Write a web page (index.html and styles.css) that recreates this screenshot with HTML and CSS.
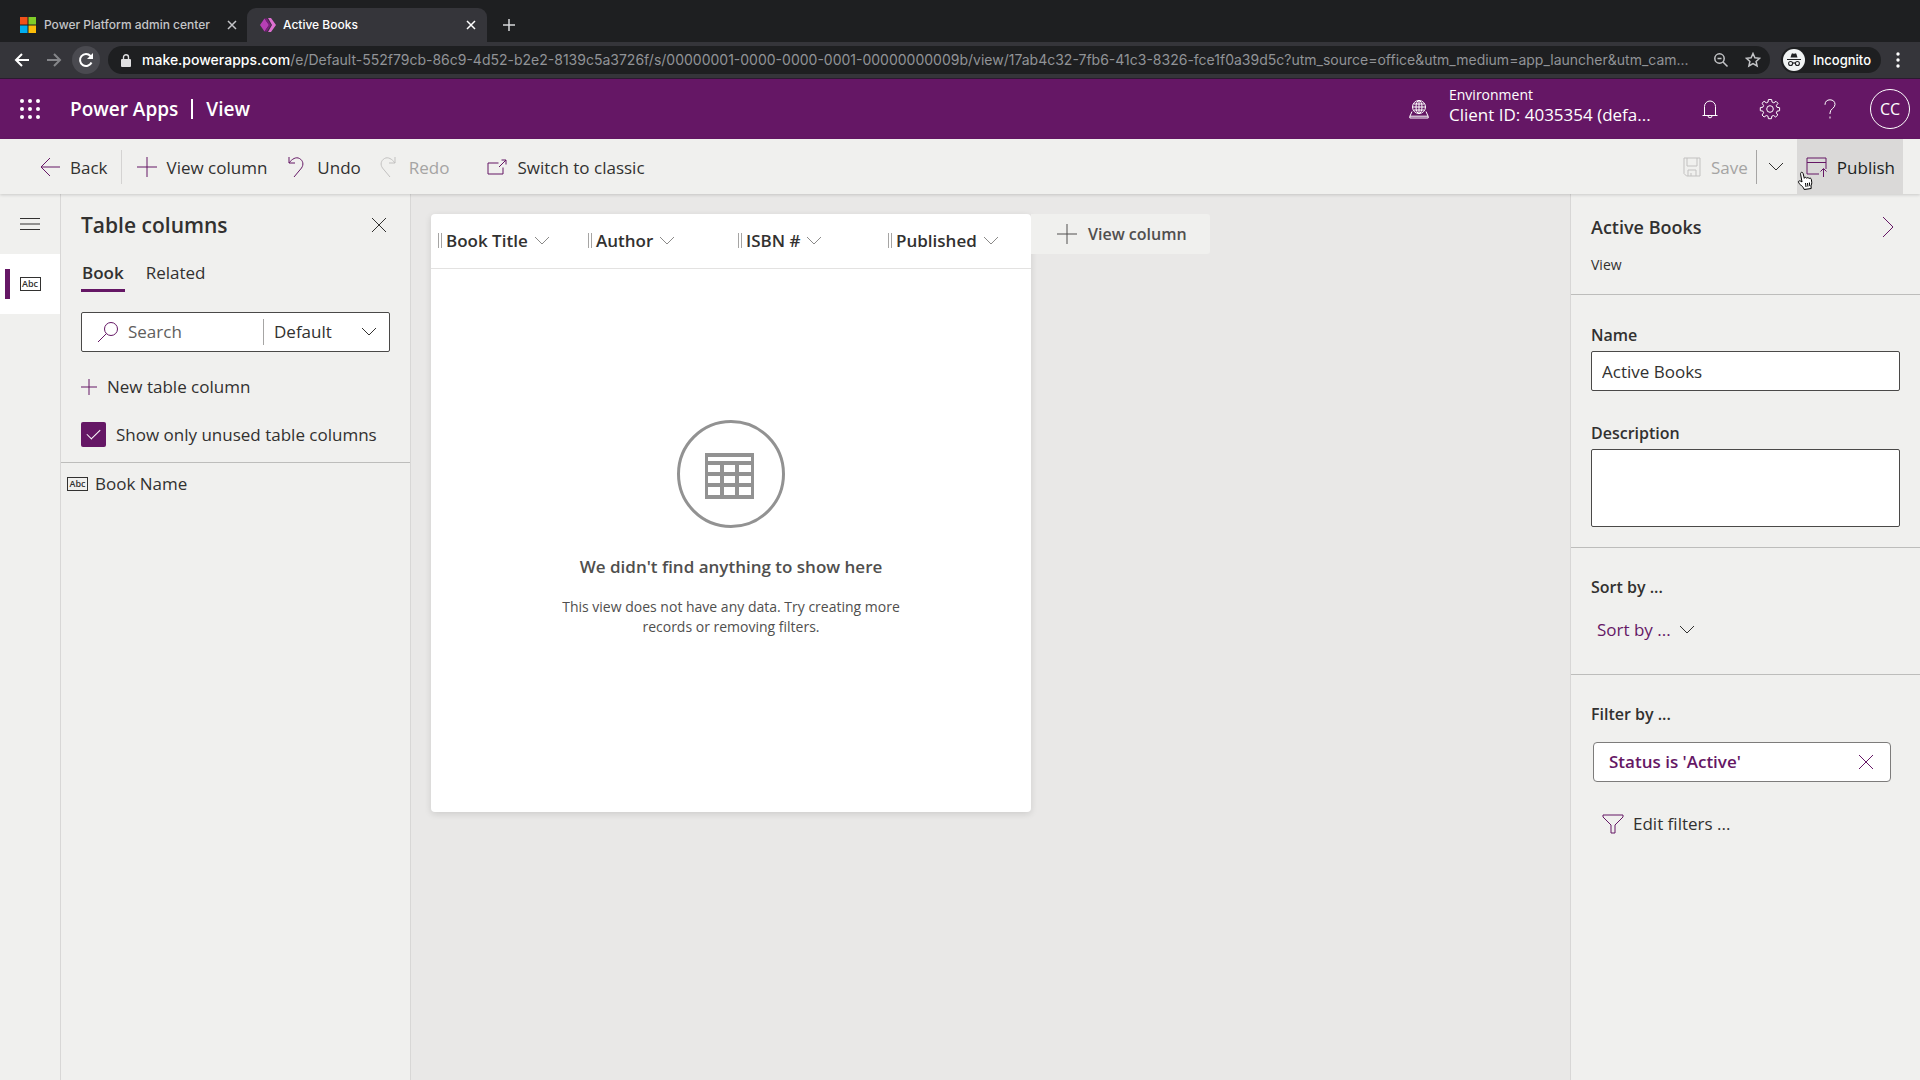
FILE: index.html
```html
<!DOCTYPE html>
<html lang="en">
<head>
<meta charset="utf-8">
<title>Active Books</title>
<meta name="viewport" content="width=device-width, initial-scale=1">
<link rel="stylesheet" href="styles.css">
</head>
<body>
<div class="browser">
  <div class="tabstrip">
    <div class="browser-tab">
      <svg width="16" height="16" viewBox="0 0 16 16"><path fill="#f1511b" d="M0 0h7.500v7.500H0z"/><path fill="#80cc28" d="M8.500 0H16v7.500H8.500z"/><path fill="#00adef" d="M0 8.500h7.500V16H0z"/><path fill="#fbbc09" d="M8.500 8.500H16V16H8.500z"/></svg>
      <span class="tab-title">Power Platform admin center</span>
      <button class="tab-close" aria-label="Close tab"><svg width="10" height="10" viewBox="0 0 10 10"><path d="M1 1l8 8M9 1L1 9"/></svg></button>
    </div>
    <div class="browser-tab current">
      <svg width="16" height="16" viewBox="0 0 16 16"><path fill="#b63fb4" d="M4.500 1.500L0 8l4.500 6.500L9 8z"/><path fill="#7a1d7c" d="M4.500 1.500H7L11 8l-4 6.500H4.500L9 8z"/><path fill="#dd6fd0" d="M8 1h3l5 7-5 7H8l4-7z"/></svg>
      <span class="tab-title">Active Books</span>
      <button class="tab-close" aria-label="Close tab"><svg width="10" height="10" viewBox="0 0 10 10"><path d="M1 1l8 8M9 1L1 9"/></svg></button>
    </div>
    <button class="tab-new" aria-label="New tab"><svg width="14" height="14" viewBox="0 0 14 14"><path d="M7 1v12M1 7h12"/></svg></button>
  </div>
  <div class="navbar">
    <button class="nav-btn" aria-label="Back"><svg width="16" height="16" viewBox="0 0 16 16"><path d="M15 8H2M8 2L2 8l6 6"/></svg></button>
    <button class="nav-btn dim" aria-label="Forward"><svg width="16" height="16" viewBox="0 0 16 16"><path d="M1 8h13M8 2l6 6-6 6"/></svg></button>
    <button class="nav-btn round" aria-label="Reload"><svg width="16" height="16" viewBox="0 0 16 16"><path d="M13.500 10.500A6 6 0 1 1 12.500 4L14 5.500"/><path class="solid" d="M15 1v6H9z"/></svg></button>
    <div class="omnibox">
      <svg width="10" height="13" viewBox="0 0 10 13"><path fill="#e0e0e2" d="M1 5h8q1 0 1 1v6q0 1-1 1H1q-1 0-1-1V6q0-1 1-1z"/><path fill="none" stroke="#e0e0e2" stroke-width="1.400" d="M2.500 5.500V3.200a2.500 2.500 0 0 1 5 0v2.300"/></svg>
      <span class="url"><b>make.powerapps.com</b>/e/Default-552f79cb-86c9-4d52-b2e2-8139c5a3726f/s/00000001-0000-0000-0001-00000000009b/view/17ab4c32-7fb6-41c3-8326-fce1f0a39d5c?utm_source=office&amp;utm_medium=app_launcher&amp;utm_cam...</span>
      <svg class="line" width="16" height="16" viewBox="0 0 16 16"><circle cx="6.500" cy="6.500" r="4.700"/><path d="M10 10l4.500 4.500M4.500 6.500h4"/></svg>
      <svg class="line" width="16" height="16" viewBox="0 0 16 16"><path d="M8 1.500l1.900 4.300 4.700.5-3.500 3.100 1 4.600L8 11.600 3.900 14l1-4.600L1.400 6.300l4.700-.5z"/></svg>
    </div>
    <div class="incognito">
      <svg width="22" height="22" viewBox="0 0 22 22"><circle cx="11" cy="11" r="11" fill="#f1f3f4"/><path fill="#202124" d="M7.500 8.500L8.600 5q.3-.8 1-.6l1.400.4 1.400-.4q.7-.2 1 .6l1.100 3.500z"/><path stroke="#202124" stroke-width="1.200" fill="none" d="M4 10.500h14M9.600 14.300q1.400-.8 2.800 0"/><g fill="none" stroke="#202124" stroke-width="1.100"><circle cx="7.600" cy="14.500" r="2"/><circle cx="14.400" cy="14.500" r="2"/></g></svg>
      <span>Incognito</span>
    </div>
    <button class="kebab" aria-label="Menu"><svg width="4" height="18" viewBox="0 0 4 18"><g fill="#fff"><circle cx="2" cy="3" r="1.700"/><circle cx="2" cy="9" r="1.700"/><circle cx="2" cy="15" r="1.700"/></g></svg></button>
  </div>
</div>

<header class="suite">
  <button class="waffle" aria-label="App launcher"><svg width="20" height="20" viewBox="0 0 20 20"><g fill="#fff"><circle cx="2" cy="2" r="2"/><circle cx="10" cy="2" r="2"/><circle cx="18" cy="2" r="2"/><circle cx="2" cy="10" r="2"/><circle cx="10" cy="10" r="2"/><circle cx="18" cy="10" r="2"/><circle cx="2" cy="18" r="2"/><circle cx="10" cy="18" r="2"/><circle cx="18" cy="18" r="2"/></g></svg></button>
  <h1 class="product"><span>Power Apps</span><i></i><span>View</span></h1>
  <button class="env">
    <svg width="20" height="20" viewBox="0 0 20 20"><circle cx="10" cy="8" r="6.500"/><ellipse cx="10" cy="8" rx="3" ry="6.500"/><path d="M4.500 5h11M4.500 11h11M3.500 8h13M10 1.500v13M3 12.500L.8 17.500v1.500h18.400v-1.500L17 12.500M.8 17.200h18.400"/></svg>
    <span class="env-text"><small>Environment</small><span>Client ID: 4035354 (defa...</span></span>
  </button>
  <div class="suite-actions">
    <button class="suite-btn" aria-label="Notifications"><svg width="20" height="20" viewBox="0 0 20 20"><path d="M2.500 16.500h15M4.500 16.500V7.500a5.500 5.500 0 0 1 11 0v9M8 16.800a2 2 0 0 0 4 0"/></svg></button>
    <button class="suite-btn" aria-label="Settings"><svg width="22" height="22" viewBox="0 0 22 22"><circle cx="11" cy="11" r="3.300"/><path d="M9.400 1.500h3.200l.5 2.600 1.700.7L17 3.300 19 5.300l-1.700 2.300.7 1.700 2.600.4v3l-2.600.5-.7 1.700L18.800 17l-2.100 2-2.200-1.500-1.700.7-.4 2.500H9.400L9 18.200l-1.700-.7L5.100 19 3 17l1.600-2.200-.7-1.700-2.600-.4V9.600l2.600-.4.7-1.700L3 5.300l2.100-2 2.200 1.500L9 4.100z"/></svg></button>
    <button class="suite-btn" aria-label="Help"><svg width="20" height="20" viewBox="0 0 20 20"><path d="M5 5.800C5 2.500 7 .8 10 .8s5 1.800 5 4.600c0 4-5 4.300-5 8.600v1M10 17.500v2"/></svg></button>
    <button class="persona">CC</button>
  </div>
</header>

<div class="commandbar">
  <div class="cmd-group">
    <button class="cmd"><svg width="20" height="20" viewBox="0 0 20 20"><path d="M20 10H1M10 1l-9 9 9 9"/></svg><span>Back</span></button>
    <i class="sep"></i>
    <button class="cmd"><svg width="20" height="20" viewBox="0 0 20 20"><path d="M10 0v20M0 10h20"/></svg><span>View column</span></button>
    <button class="cmd undo"><svg width="16" height="22" viewBox="0 0 16 22"><path d="M1 1v6h6M1 7C4 3 8 .5 11.500 2.500s4.500 6 2 9.500L6 21"/></svg><span>Undo</span></button>
    <button class="cmd redo" disabled><svg width="16" height="22" viewBox="0 0 16 22"><path d="M15 1v6H9M15 7C12 3 8 .5 4.500 2.500S0 8.500 2.500 12L10 21"/></svg><span>Redo</span></button>
    <button class="cmd switch"><svg width="20" height="16" viewBox="0 0 20 16"><path d="M11.500 4H1v11h15V8.500M12 8l7-7M14.500 1H19v4.500"/></svg><span>Switch to classic</span></button>
  </div>
  <div class="cmd-group">
    <button class="cmd save" disabled><svg width="18" height="20" viewBox="0 0 18 20"><path d="M1 1h16v18H3.500L1 16.500zM4 1v8h10V1M5 19v-6h8v6M8 19v-3"/></svg><span>Save</span></button>
    <i class="sep dark"></i>
    <button class="cmd more" aria-label="More save options"><svg class="ink" width="16" height="10" viewBox="0 0 16 10"><path d="M1 1l7 7 7-7"/></svg></button>
    <button class="cmd publish"><svg width="21" height="20" viewBox="0 0 21 20"><path d="M13 17H1V1h19v11M1 5.500h19M17.500 20v-8M14.500 14.500l3-3 3 3"/></svg><span>Publish</span>
      <svg class="pointer" width="18" height="20" viewBox="0 0 18 20"><path d="M5 11L3.600 3.200C3.300 1 5.600.6 6.100 2.500l1.200 4.800c.4-1.300 2-1.300 2.400 0 .6-1.100 2-.9 2.400.3.700-.8 2-.5 2.200.7.400 2.500.9 4.200-.3 6.500l.2 2.700-7 1-.8-1.900C4 14.500 2 12.500 1.500 11.200c-.5-1.500 1.500-2 3.500-.2z"/><path class="knuckles" d="M8.500 12l.5 4M10.500 12l.4 3.600M12.400 11.500l.4 3.600"/></svg>
    </button>
  </div>
</div>

<div class="workspace">
  <nav class="rail">
    <button class="rail-btn" aria-label="Expand menu"><svg width="20" height="12" viewBox="0 0 20 12"><path d="M0 .5h20M0 6h20M0 11.500h20"/></svg></button>
    <button class="rail-btn selected" aria-label="Table columns"><span class="abc">Abc</span></button>
  </nav>

  <aside class="columns">
    <div class="columns-head">
      <h2>Table columns</h2>
      <button class="icon-btn" aria-label="Close"><svg class="ink" width="16" height="16" viewBox="0 0 16 16"><path d="M1 1l14 14M15 1L1 15"/></svg></button>
    </div>
    <div class="pivot">
      <button class="pivot-tab on">Book</button>
      <button class="pivot-tab">Related</button>
    </div>
    <div class="searchbox">
      <svg width="22" height="22" viewBox="0 0 22 22"><circle cx="14" cy="8" r="6.500"/><path d="M9.500 12.500L1 21"/></svg>
      <input type="text" placeholder="Search" aria-label="Search">
      <i class="sep dark"></i>
      <div class="select-wrap">
        <select aria-label="Column filter"><option>Default</option></select>
        <svg class="ink" width="14" height="8" viewBox="0 0 14 8"><path d="M0 0l7 7 7-7"/></svg>
      </div>
    </div>
    <button class="new-col"><svg width="16" height="16" viewBox="0 0 16 16"><path d="M8 0v16M0 8h16"/></svg><span>New table column</span></button>
    <label class="unused"><input type="checkbox" checked><span>Show only unused table columns</span></label>
    <ul class="column-list">
      <li><span class="abc">Abc</span><span>Book Name</span></li>
    </ul>
  </aside>

  <main class="canvas">
    <section class="grid-card">
      <table class="grid">
        <thead><tr>
          <th><button class="col-head"><i class="grip"></i><span>Book Title</span><svg width="14" height="8" viewBox="0 0 14 8"><path d="M0 0l7 7 7-7"/></svg></button></th>
          <th><button class="col-head"><i class="grip"></i><span>Author</span><svg width="14" height="8" viewBox="0 0 14 8"><path d="M0 0l7 7 7-7"/></svg></button></th>
          <th><button class="col-head"><i class="grip"></i><span>ISBN #</span><svg width="14" height="8" viewBox="0 0 14 8"><path d="M0 0l7 7 7-7"/></svg></button></th>
          <th><button class="col-head"><i class="grip"></i><span>Published</span><svg width="14" height="8" viewBox="0 0 14 8"><path d="M0 0l7 7 7-7"/></svg></button></th>
        </tr></thead>
      </table>
      <div class="empty">
        <svg width="108" height="108" viewBox="0 0 108 108"><circle cx="54" cy="54" r="52.500" fill="none" stroke="#929292" stroke-width="3"/><path fill="#929292" fill-rule="evenodd" d="M28 33h49v46H28zM31 37v4h43v-4zM31 45v7h12v-7zM47 45v7h11v-7zM62 45v7h12v-7zM31 56v7h12v-7zM47 56v7h11v-7zM62 56v7h12v-7zM31 67v8h12v-8zM47 67v8h11v-8zM62 67v8h12v-8z"/></svg>
        <h3>We didn't find anything to show here</h3>
        <p>This view does not have any data. Try creating more records or removing filters.</p>
      </div>
    </section>
    <button class="add-col"><svg width="20" height="20" viewBox="0 0 20 20"><path d="M10 0v20M0 10h20"/></svg><span>View column</span></button>
  </main>

  <aside class="props">
    <section class="props-head">
      <div class="props-title">
        <h2>Active Books</h2>
        <button class="icon-btn" aria-label="Collapse"><svg width="12" height="22" viewBox="0 0 12 22"><path d="M1 1l10 10L1 21"/></svg></button>
      </div>
      <p>View</p>
    </section>
    <section class="fields">
      <label for="name">Name</label>
      <input id="name" type="text" value="Active Books">
      <label for="desc">Description</label>
      <textarea id="desc"></textarea>
    </section>
    <section class="sort">
      <h3>Sort by ...</h3>
      <button class="sort-btn"><span>Sort by ...</span><svg class="ink" width="14" height="8" viewBox="0 0 14 8"><path d="M0 0l7 7 7-7"/></svg></button>
    </section>
    <section class="filter">
      <h3>Filter by ...</h3>
      <div class="chip"><a href="#">Status is 'Active'</a><button class="icon-btn" aria-label="Remove filter"><svg width="16" height="16" viewBox="0 0 16 16"><path d="M1 1l14 14M15 1L1 15"/></svg></button></div>
      <button class="edit-filters"><svg width="22" height="20" viewBox="0 0 22 20"><path d="M1 1h20v2l-8 8v8H9v-8L1 3z"/></svg><span>Edit filters ...</span></button>
    </section>
  </aside>
</div>
</body>
</html>
```
FILE: styles.css
```css
:root {
  --purple: #651765;
  --ink: #323130;
  --panel: #f0f0ee;
  --line: #bdbdbb;
}

* { box-sizing: border-box; }

body {
  margin: 0;
  min-height: 100vh;
  display: flex;
  flex-direction: column;
  background: #e9e8e7;
  color: var(--ink);
  font: 17px/24px "Open Sans", "Noto Sans", sans-serif;
}

button, input, select, textarea { font: inherit; color: inherit; }
button { border: 0; padding: 0; background: none; display: flex; align-items: center; white-space: nowrap; }
h1, h2, h3, p, ul { margin: 0; padding: 0; font-weight: 600; }
svg { flex: none; fill: none; stroke: var(--purple); }
svg.ink { stroke: var(--ink); }
.icon-btn { justify-content: center; }

/* Browser window */
.browser { background: #35353a; font: 13px/16px Inter, Roboto, sans-serif; color: #fff; }
.browser svg { stroke: none; }
.tabstrip { display: flex; height: 42px; padding-top: 8px; background: #1e1f21; }
.browser-tab { display: flex; align-items: center; gap: 8px; width: 247px; padding: 0 9px 0 20px; color: #c4c5c8; }
.browser-tab.current { width: 240px; gap: 7px; padding: 0 10px 0 13px; border-radius: 9px 9px 0 0; background: #35353a; color: #fff; }
.tab-title { flex: 1; white-space: nowrap; font-size: 12px; font-weight: 500; }
.tab-close { padding: 1px; }
.tab-close svg, .tab-new svg { stroke: currentColor; stroke-width: 1.500; }
.tab-new { padding: 0 15px; color: #d6d7d9; }
.navbar { display: flex; align-items: center; height: 37px; padding: 0 20px 0 6px; border-bottom: 1px solid #2b1a30; }
.nav-btn { width: 32px; height: 28px; justify-content: center; }
.nav-btn svg { stroke: #fff; stroke-width: 2; }
.nav-btn.dim svg { stroke: #85868a; }
.nav-btn.round { width: 28px; margin: 0 8px 0 2px; border-radius: 50%; background: #4a4a50; }
.nav-btn .solid { fill: #fff; stroke: none; }
.omnibox { flex: 1; min-width: 0; display: flex; align-items: center; gap: 11px; height: 28px; padding: 0 9px 0 13px; border-radius: 14px; background: #1e1f21; }
.omnibox .url { flex: 1; min-width: 0; overflow: hidden; white-space: nowrap; font-size: 14px; color: #919397; }
.omnibox b { font-weight: 500; color: #fff; }
.omnibox .line { margin-left: 5px; stroke: #c4c5c8; stroke-width: 1.500; }
.incognito { display: flex; align-items: center; gap: 8px; height: 26px; margin: 0 15px 0 11px; padding: 0 10px 0 2px; border-radius: 13px; background: #1e1f21; font-weight: 500; }

/* Suite header */
.suite { display: flex; align-items: center; height: 60px; padding-left: 20px; background: var(--purple); color: #fff; }
.suite svg { stroke: #fff; }
.waffle svg { stroke: none; }
.product { flex: 1; display: flex; align-items: center; margin-left: 30px; font-size: 19px; line-height: 28px; }
.product i { width: 2px; height: 20px; margin: 0 13px; background: #fff; }
.env { gap: 20px; width: 271px; text-align: left; }
.env-text { display: flex; flex-direction: column; padding-bottom: 6px; line-height: 22px; }
.env-text small { font-size: 14px; line-height: 18px; }
.suite-actions { display: flex; align-items: center; }
.suite-btn { width: 60px; height: 60px; justify-content: center; }
.persona { justify-content: center; width: 40px; height: 40px; margin: 0 10px; border: 1px solid #fff; border-radius: 50%; font-size: 16px; }

/* Command bar */
.commandbar { display: flex; justify-content: space-between; height: 55px; padding: 0 17px 0 40px; background: var(--panel); box-shadow: 0 1px 3px rgba(0, 0, 0, .16); z-index: 1; }
.cmd-group { display: flex; align-items: center; }
.cmd { position: relative; gap: 10px; height: 55px; margin-right: 13px; }
.cmd span { padding-top: 2px; }
.cmd:disabled { color: #a5a4a3; }
.cmd:disabled svg { stroke: #c2c1c0; }
.sep { width: 1px; height: 34px; margin-right: 15px; background: #d4d3d2; }
.sep.dark { background: #a6a5a4; }
.undo { margin-left: 8px; margin-right: 19px; gap: 13px; }
.redo { margin-right: 38px; gap: 13px; }
.save { margin-right: 8px; gap: 10px; }
.save + .sep { margin-right: 11px; }
.more { margin-right: 13px; }
.publish { margin-right: 0; padding: 0 8px 0 9px; background: #dad9d8; color: #201f1e; }
.pointer { position: absolute; left: 0; top: 32px; fill: #fff; stroke: #000; }
.pointer .knuckles { fill: none; }

/* Workspace */
.workspace { flex: 1; display: flex; }
.rail { width: 60px; background: var(--panel); }
.rail-btn { width: 60px; height: 60px; justify-content: center; }
.rail-btn svg { stroke: var(--ink); }
.rail-btn.selected { background: linear-gradient(var(--purple), var(--purple)) 5px 15px / 5px 30px no-repeat #fff; }
.abc { flex: none; width: 21px; height: 14px; border: 1px solid var(--ink); font-size: 9px; font-weight: 600; line-height: 12px; text-align: center; }

.columns { width: 351px; border: solid #d8d7d6; border-width: 0 1px; background: var(--panel); }
.columns-head { display: flex; justify-content: space-between; align-items: center; height: 60px; padding: 2px 15px 0 20px; }
.columns-head h2 { font-size: 21px; line-height: 28px; }
.columns-head .icon-btn { width: 32px; height: 32px; }
.pivot { display: flex; gap: 20px; padding: 6px 20px 0; }
.pivot-tab { height: 32px; border-bottom: 3px solid transparent; padding: 0 1px 3px; }
.pivot-tab.on { font-weight: 600; border-color: var(--purple); }
.searchbox { display: flex; align-items: center; height: 40px; margin: 20px 20px 0; padding-left: 15px; border: 1px solid #4a4948; border-radius: 2px; background: #fff; }
.searchbox input { flex: 1; min-width: 0; margin-left: 9px; padding: 0; border: 0; outline: 0; background: none; }
.searchbox input::placeholder { color: #605e5c; opacity: 1; }
.searchbox .sep { height: 26px; margin-right: 10px; }
.select-wrap { display: flex; align-items: center; width: 115px; padding-right: 13px; }
.select-wrap select { flex: 1; appearance: none; border: 0; padding: 0; background: none; }
.new-col { gap: 10px; margin: 23px 20px 0; }
.unused { display: flex; align-items: center; gap: 10px; height: 64px; padding: 8px 20px 0; border-bottom: 1px solid var(--line); white-space: nowrap; }
.unused input { appearance: none; flex: none; width: 25px; height: 25px; margin: 0; border-radius: 2px; background: var(--purple); display: grid; place-items: center; }
.unused input:checked::after { content: ""; width: 12px; height: 6px; margin-bottom: 4px; border: solid #fff; border-width: 0 0 1px 1px; transform: rotate(-45deg); }
.column-list { list-style: none; font-weight: 400; }
.column-list li { display: flex; align-items: center; gap: 7px; height: 42px; padding-left: 6px; }

/* Canvas */
.canvas { flex: 1; display: flex; align-items: flex-start; padding: 20px; }
.grid-card { width: 600px; height: 598px; border-radius: 4px; background: #fff; box-shadow: 0 2px 7px rgba(0, 0, 0, .12); }
.grid { width: 100%; table-layout: fixed; border-collapse: collapse; }
.grid th { height: 54px; padding: 0 0 0 7px; border-bottom: 1px solid #e3e2e1; }
.col-head { font-weight: 600; }
.grip { width: 4px; height: 15px; margin-right: 4px; border: solid #a6a5a4; border-width: 0 1px; }
.col-head svg { margin-left: 7px; stroke: #8a8988; }
.empty { display: flex; flex-direction: column; align-items: center; padding-top: 151px; color: #504f4e; text-align: center; }
.empty svg { stroke: none; }
.empty h3 { margin: 27px 0 18px; font-size: 17px; font-weight: 600; }
.empty p { width: 350px; font-size: 14px; font-weight: 400; line-height: 20px; }
.add-col { gap: 11px; height: 40px; padding: 0 23px 0 26px; border-radius: 0 3px 3px 0; background: #f0f0ee; color: #504f4e; font-size: 16px; font-weight: 600; }
.add-col svg { stroke: #504f4e; }

/* Properties */
.props { width: 350px; border-left: 1px solid #d8d7d6; background: var(--panel); }
.props section { padding: 0 20px; border-bottom: 1px solid var(--line); }
.props h3, .fields label { display: block; font-size: 16px; font-weight: 600; }
.props-head { height: 101px; }
.props .props-title { display: flex; justify-content: space-between; align-items: center; padding-top: 17px; }
.props-title h2 { font-size: 18px; line-height: 32px; }
.props-title .icon-btn { width: 24px; height: 32px; }
.props-head p { margin-top: 12px; font-size: 14px; line-height: 20px; font-weight: 400; }
.props .fields { padding-top: 28px; padding-bottom: 20px; }
.fields input, .fields textarea { display: block; width: 309px; margin-top: 4px; border: 1px solid #4a4948; border-radius: 2px; background: #fff; resize: none; }
.fields input { height: 40px; margin-bottom: 30px; padding: 0 10px; }
.fields textarea { height: 78px; }
.sort { height: 127px; }
.props .sort, .props .filter { padding-top: 27px; }
.sort-btn { gap: 9px; margin: 19px 0 0 6px; color: var(--purple); }
.props .filter { border: 0; }
.chip { display: flex; align-items: center; justify-content: space-between; width: 298px; height: 40px; margin: 16px 0 30px 2px; padding: 0 8px 0 15px; border: 1px solid #7d7c7b; border-radius: 4px; background: #fff; }
.chip a { color: var(--purple); font-weight: 600; text-decoration: none; }
.chip .icon-btn { width: 32px; height: 32px; }
.edit-filters { gap: 9px; margin-left: 11px; }
```
